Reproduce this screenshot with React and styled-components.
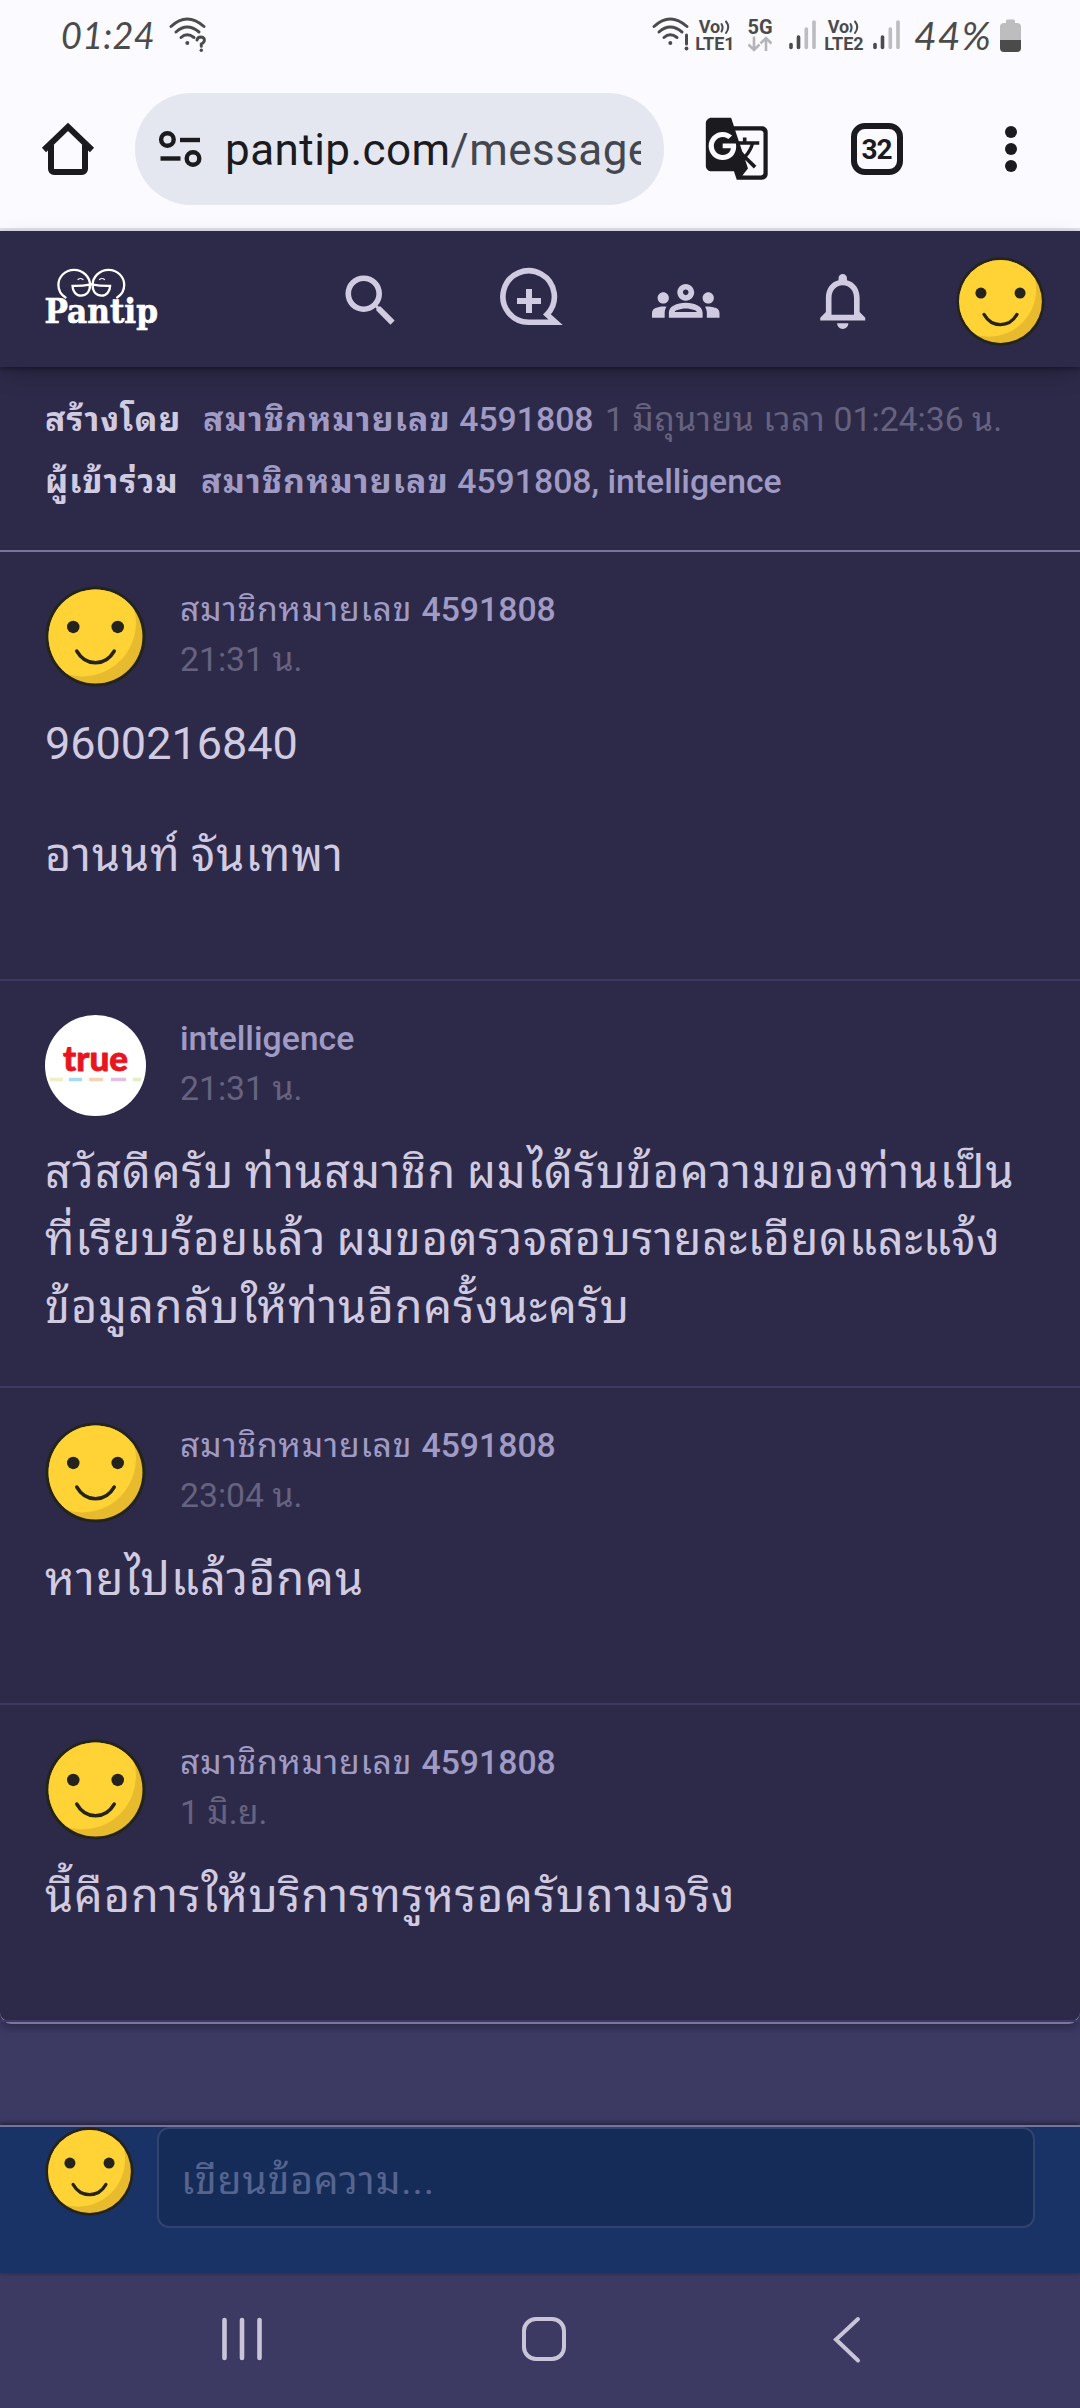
import React, { useId } from "react";
import styled, { createGlobalStyle } from "styled-components";
import { MdSearch, MdOutlineGroups, MdNotificationsNone, MdGTranslate } from "react-icons/md";

const GlobalStyle = createGlobalStyle`
  *, *::before, *::after { box-sizing: border-box; }
  body {
    margin: 0;
    background: #3c3963;
    font-family: Roboto, "Noto Sans Thai Looped", "Noto Sans", sans-serif;
  }
  svg { display: block; flex: none; overflow: visible; }
`;

const Screen = styled.div`
  width: 1080px;
  height: 2408px;
  overflow: hidden;
  display: flex;
  flex-direction: column;
  background: #3c3963;
`;

/* ---------- Status bar ---------- */

const StatusBar = styled.div`
  height: 72px;
  flex: none;
  display: flex;
  align-items: center;
  padding: 0 59px 2px 61px;
  background: #fafaff;
  color: #4b4b4b;
`;

const Handwritten = styled.span`
  font-family: Lato, "Open Sans", sans-serif;
  font-style: italic;
  font-size: ${(p) => p.$size}px;
  line-height: 40px;
  letter-spacing: ${(p) => p.$spacing}px;
  width: ${(p) => p.$width}px;
  white-space: nowrap;
`;

const StatusRight = styled.div`
  margin-left: auto;
  display: flex;
  align-items: center;
`;

const Stack = styled.div`
  width: ${(p) => p.$width}px;
  margin-right: ${(p) => p.$after}px;
  display: flex;
  flex-direction: column;
  align-items: center;
  font-size: 18px;
  font-weight: 700;
  line-height: 17px;
  white-space: nowrap;
`;

const FiveG = styled.div`
  font-size: 20px;
  line-height: 17px;
  font-weight: 700;
`;

const VoLine = styled.div`
  display: flex;
  align-items: center;
  line-height: 17px;
`;

const Gap = styled.div`
  width: ${(p) => p.$w}px;
  flex: none;
`;

function Wifi({ mark }) {
  return (
    <svg width="38" height="36" viewBox="0 0 38 36" fill="none" stroke="#4b4b4b" strokeWidth="3" strokeLinecap="round">
      <path d="M2 9.5 Q18 -5.5 35 9.5" />
      <path d="M7 15 Q18 5 30 15" />
      <path d="M12 20.5 Q18 15 25 20.5" />
      <circle cx="18.3" cy="26" r="2" fill="#4b4b4b" stroke="none" />
      {mark === "?" ? (
        <>
          <path d="M28 23 Q28.5 20 32 20 Q36 20.5 35.3 24 Q34.5 26 32.3 27 V29.3" />
          <circle cx="32.3" cy="33.3" r="1.7" fill="#4b4b4b" stroke="none" />
        </>
      ) : (
        <>
          <path d="M34.5 18 V27" />
          <circle cx="34.5" cy="31.5" r="1.9" fill="#4b4b4b" stroke="none" />
        </>
      )}
    </svg>
  );
}

function SignalBars() {
  return (
    <svg width="28" height="30" viewBox="0 0 28 30" strokeWidth="3.6" strokeLinecap="round">
      <path d="M2 24.5 V27.5" stroke="#4b4b4b" />
      <path d="M9.5 17 V27.5" stroke="#4b4b4b" />
      <path d="M17.3 9 V27.5" stroke="#bdbdbf" />
      <path d="M25 2 V27.5" stroke="#bdbdbf" />
    </svg>
  );
}

function DataArrows() {
  return (
    <svg width="26" height="16" viewBox="0 0 26 16" fill="none" stroke="#b5b5b7" strokeWidth="2.6">
      <path d="M7 0.5 V13.5 M1.5 8.5 L7 14 L12.5 8.5" />
      <path d="M19 15 V2 M13.5 7.5 L19 2 L24.5 7.5" />
    </svg>
  );
}

function Battery() {
  return (
    <svg width="21" height="33" viewBox="0 0 21 33">
      <path d="M6 2 a1.5 1.5 0 0 1 1.5 -1.5 h6 a1.5 1.5 0 0 1 1.5 1.5 v2 h2 a4 4 0 0 1 4 4 v13 h-21 v-13 a4 4 0 0 1 4 -4 h2 z" fill="#bdbdbf" />
      <path d="M0 21 h21 v8 a4 4 0 0 1 -4 4 h-13 a4 4 0 0 1 -4 -4 z" fill="#4b4b4b" />
    </svg>
  );
}

function VoWaves() {
  return (
    <svg width="11" height="14" viewBox="0 0 11 14" fill="none" stroke="#4b4b4b" strokeWidth="2" strokeLinecap="round">
      <path d="M1.5 4 Q3.6 7.5 1.5 11.5" />
      <path d="M6 1.5 Q10.5 7 6 13" />
    </svg>
  );
}

/* ---------- Browser toolbar ---------- */

const Toolbar = styled.div`
  height: 159px;
  flex: none;
  display: flex;
  align-items: center;
  padding: 0 0 2px 42px;
  background: #fafaff;
  border-bottom: 3px solid #e1e1ea;
`;

const Omnibox = styled.div`
  width: 529px;
  height: 112px;
  margin: 0 39px 0 41px;
  padding: 0 23px 0 24px;
  display: flex;
  align-items: center;
  border-radius: 56px;
  background: #e4e7f0;
`;

const Url = styled.div`
  flex: 1;
  margin-left: 23px;
  overflow: hidden;
  white-space: nowrap;
  font-size: 44px;
  line-height: 60px;
  letter-spacing: 0.45px;
  color: #44474f;
  padding-top: 2px;

  b {
    font-weight: 400;
    color: #1b1b1f;
  }
`;

const TabCount = styled.div`
  width: 52px;
  height: 52px;
  margin: 0 0 0 80px;
  display: flex;
  align-items: center;
  justify-content: center;
  border: 6px solid #1b1b1f;
  border-radius: 14px;
  font-size: 28px;
  font-weight: 700;
  letter-spacing: -1px;
  color: #1b1b1f;
`;

function HomeIcon() {
  return (
    <svg width="52" height="52" viewBox="0 0 52 52" fill="none" stroke="#1b1b1f" strokeWidth="6">
      <path d="M2 27 L26 3.8 L50 27" />
      <path d="M9 22 V46 a3 3 0 0 0 3 3 H40 a3 3 0 0 0 3 -3 V22" />
    </svg>
  );
}

function TuneIcon() {
  return (
    <svg width="43" height="37" viewBox="0 0 43 37" fill="none" stroke="#1b1b1f" strokeWidth="4.4">
      <circle cx="8.4" cy="8.5" r="6.3" />
      <path d="M21 9 H41" />
      <circle cx="34" cy="27.5" r="6.3" />
      <path d="M1.5 27.5 H21.5" />
    </svg>
  );
}

function MoreIcon() {
  return (
    <svg width="12" height="48" viewBox="0 0 12 48" fill="#1b1b1f">
      <circle cx="6" cy="7" r="6" />
      <circle cx="6" cy="24" r="6" />
      <circle cx="6" cy="41" r="6" />
    </svg>
  );
}

/* ---------- Shared smiley avatar ---------- */

function Smiley({ size }) {
  const id = useId();
  return (
    <svg width={size} height={size} viewBox="0 0 100 100">
      <clipPath id={id}>
        <circle cx="50" cy="50" r="46.5" />
      </clipPath>
      <circle cx="50" cy="50" r="49.6" fill="#24241d" />
      <circle cx="50" cy="50" r="46.5" fill="#e8bb2f" />
      <circle cx="37" cy="36.5" r="53" fill="#ffd236" clipPath={`url(#${id})`} />
      <circle cx="28" cy="40.5" r="6.2" fill="#24241d" />
      <circle cx="72" cy="40.5" r="6.2" fill="#24241d" />
      <path d="M31.5 64.5 Q38 76 50 76 Q62 76 68.5 64.5" fill="none" stroke="#24241d" strokeWidth="3.6" strokeLinecap="round" />
    </svg>
  );
}

/* ---------- Site header ---------- */

const SiteHeader = styled.header`
  height: 136px;
  flex: none;
  position: relative;
  z-index: 1;
  display: grid;
  grid-template-columns: 292px 159px 156px 157px 147px 90px;
  align-items: center;
  padding: 4px 0 0 45px;
  background: #2d2a49;
  box-shadow: 0 2px 4px rgba(0, 0, 0, 0.35), 0 8px 22px -4px rgba(0, 0, 0, 0.28);
  color: #d1cbe2;
`;

const GLASSES = "M65.5 297.5 C60 294 58.4 289 58.4 285 A15.6 15.2 0 0 1 74 269.8 C83 269.8 90 277 90 285 C90 292 86 295.6 81 295.6 C76 295.6 72.500 291 72.500 285.8 Q82 286 91.3 284.3";

function PantipLogo() {
  return (
    <svg width="116" height="72" viewBox="45 265 116 72">
      <g fill="none" stroke="#fff" strokeWidth="2.3" strokeLinecap="round">
        <path d={GLASSES} />
        <path d={GLASSES} transform="translate(182.6 0) scale(-1 1)" />
        <path d="M78 279.500 Q80.500 277.500 83 279.500" strokeWidth="1.2" />
        <path d="M99.500 279.500 Q102 277.500 104.500 279.500" strokeWidth="1.2" />
      </g>
      <text x="44.500" y="322.700" fill="#fff" stroke="#fff" strokeWidth="0.7" fontFamily="DejaVu Serif, serif" fontWeight="700" fontSize="34" textLength="113.500" lengthAdjust="spacingAndGlyphs">Pantip</text>
    </svg>
  );
}

function NewTopicIcon() {
  return (
    <svg width="68" height="68" viewBox="0 0 68 68" fill="none" stroke="#d1cbe2" strokeWidth="5.6">
      <path d="M59.500 55.200 H33 A25.700 25.700 0 1 1 51 47.500 Z" />
      <path d="M33 22 V46 M21 34 H45" strokeWidth="6" />
    </svg>
  );
}

/* ---------- Conversation ---------- */

const Card = styled.main`
  height: 1657px;
  flex: none;
  background: #2d2a49;
  border-bottom: 2px solid #7a769f;
  border-radius: 0 0 12px 12px;
  box-shadow: 0 4px 8px rgba(0, 0, 0, 0.28);
`;

const Info = styled.section`
  height: 185px;
  padding: 21.5px 0 0 45px;
  border-bottom: 2px solid #77739c;
  font-size: 33.75px;
`;

const InfoRow = styled.div`
  display: flex;
  line-height: 62px;
  white-space: nowrap;
`;

const Label = styled.span`
  width: ${(p) => p.$width}px;
  font-weight: 700;
  letter-spacing: 1.1px;
  color: #d1cbe2;
`;

const Member = styled.span`
  width: ${(p) => (p.$width ? `${p.$width}px` : "auto")};
  font-weight: 500;
  color: #a09bc4;
`;

const Stamp = styled.span`
  color: #66627f;
`;

const Thai = styled.span`
  font-weight: ${(p) => (p.$bold ? 700 : 400)};
  letter-spacing: ${(p) => p.$spacing ?? 0.8}px;
`;

const Message = styled.article`
  padding: 33.75px 45px ${(p) => p.$bottom}px;
  border-bottom: 2px solid #3c3963;
`;

const MessageHead = styled.div`
  height: 101.25px;
  display: flex;
  margin-bottom: 22.5px;
`;

const Meta = styled.div`
  margin: -1px 0 0 34px;
  display: flex;
  flex-direction: column;
  font-size: 33.75px;
  line-height: 50.6px;
  white-space: nowrap;
`;

const Paragraph = styled.p`
  margin: 0 0 ${(p) => p.$after || 0}px;
  font-size: 45px;
  line-height: 67.5px;
  letter-spacing: ${(p) => p.$spacing}px;
  word-spacing: -2px;
  color: #d1cbe2;
  white-space: nowrap;
`;

function TrueAvatar() {
  return (
    <svg width="101" height="101" viewBox="0 0 101 101">
      <circle cx="50.500" cy="50.500" r="50.500" fill="#fff" />
      <text x="18" y="56" fill="#e8141e" stroke="#e8141e" strokeWidth="0.8" strokeLinejoin="round" fontFamily="Lato, sans-serif" fontWeight="900" fontSize="35" textLength="65" lengthAdjust="spacingAndGlyphs">true</text>
      <g strokeWidth="3.500" opacity="0.6">
        <path d="M5 64.500 H18" stroke="#e9e3a0" />
        <path d="M24 64.500 H37" stroke="#6cc3e6" />
        <path d="M44 64.500 H58" stroke="#f0b584" />
        <path d="M66 64.500 H81" stroke="#d490d0" />
        <path d="M88 64.500 H96" stroke="#cfe3a0" />
      </g>
    </svg>
  );
}

const messages = [
  {
    author: "สมาชิกหมายเลข",
    number: "4591808",
    time: "21:31 น.",
    lines: [["9600216840", 0], ["อานนท์ จันเทพา", 1.1]],
    spaced: true,
    bottom: 89.5,
  },
  {
    number: "intelligence",
    time: "21:31 น.",
    official: true,
    lines: [
      ["สวัสดีครับ ท่านสมาชิก ผมได้รับข้อความของท่านเป็น", 1.2],
      ["ที่เรียบร้อยแล้ว ผมขอตรวจสอบรายละเอียดและแจ้ง", 0.87],
      ["ข้อมูลกลับให้ท่านอีกครั้งนะครับ", 1.05],
    ],
    bottom: 45,
  },
  { author: "สมาชิกหมายเลข", number: "4591808", time: "23:04 น.", lines: [["หายไปแล้วอีกคน", 1.1]], bottom: 90 },
  { author: "สมาชิกหมายเลข", number: "4591808", time: "1 มิ.ย.", lines: [["นี้คือการให้บริการทรูหรอครับถามจริง", 1]], bottom: 90 },
];

/* ---------- Composer & system navigation ---------- */

const Composer = styled.div`
  height: 148px;
  margin-top: 101px;
  flex: none;
  display: flex;
  align-items: flex-start;
  padding: 0 45px;
  background: #193366;
  border-top: 2px solid #77739c;
  box-shadow: 0 -1px 5px rgba(0, 0, 0, 0.55);
`;

const Input = styled.div`
  flex: 1;
  height: 101px;
  margin-left: 23px;
  padding-left: 22px;
  border: 2px solid #30446f;
  border-radius: 12px;
  background: #152c58;
  color: #566490;
  font-size: 39px;
  line-height: 105px;
  letter-spacing: 0.9px;
  white-space: nowrap;
`;

const NavBar = styled.nav`
  height: 135px;
  flex: none;
  display: grid;
  grid-template-columns: 1fr 1fr 1fr;
  padding: 44px 82px 0 91px;
`;

const NavSlot = styled.div`
  display: flex;
  justify-content: center;
`;

export default function App() {
  return (
    <>
      <GlobalStyle />
      <Screen>
        <StatusBar>
          <Handwritten $size={36} $spacing={0.3} $width={108}>01:24</Handwritten>
          <Wifi mark="?" />
          <StatusRight>
            <Wifi mark="!" />
            <Gap $w={6} />
            <Stack $width={38} $after={13}>
              <VoLine>Vo<VoWaves /></VoLine>
              <div>LTE1</div>
            </Stack>
            <Stack $width={26} $after={16}>
              <FiveG>5G</FiveG>
              <DataArrows />
            </Stack>
            <SignalBars />
            <Gap $w={7} />
            <Stack $width={40} $after={9}>
              <VoLine>Vo<VoWaves /></VoLine>
              <div>LTE2</div>
            </Stack>
            <SignalBars />
            <Gap $w={13} />
            <Handwritten $size={39} $spacing={1.2} $width={86}>44%</Handwritten>
            <Battery />
          </StatusRight>
        </StatusBar>

        <Toolbar>
          <HomeIcon />
          <Omnibox>
            <TuneIcon />
            <Url><b>pantip.com</b>/message</Url>
          </Omnibox>
          <MdGTranslate size={67.5} color="#1b1b1f" />
          <TabCount>32</TabCount>
          <Gap $w={102} />
          <MoreIcon />
        </Toolbar>

        <SiteHeader>
          <PantipLogo />
          <MdSearch size={67.5} />
          <NewTopicIcon />
          <MdOutlineGroups size={67.5} />
          <MdNotificationsNone size={67.5} />
          <Smiley size={89} />
        </SiteHeader>

        <Card>
          <Info>
            <InfoRow>
              <Label $width={158}>สร้างโดย</Label>
              <Member $width={402}><Thai $bold $spacing={1.15}>สมาชิกหมายเลข</Thai> 4591808</Member>
              <Stamp>1 <Thai $spacing={0.5}>มิถุนายน เวลา</Thai> 01:24:36 น.</Stamp>
            </InfoRow>
            <InfoRow>
              <Label $width={156}>ผู้เข้าร่วม</Label>
              <Member><Thai $bold $spacing={1.15}>สมาชิกหมายเลข</Thai> 4591808, intelligence</Member>
            </InfoRow>
          </Info>
          {messages.map((m, i) => (
            <Message key={i} $bottom={m.bottom}>
              <MessageHead>
                {m.official ? <TrueAvatar /> : <Smiley size={101} />}
                <Meta>
                  <Member>
                    {m.author && <Thai>{m.author} </Thai>}
                    {m.number}
                  </Member>
                  <Stamp>{m.time}</Stamp>
                </Meta>
              </MessageHead>
              {m.lines.map(([line, spacing], j) => (
                <Paragraph key={j} $spacing={spacing} $after={m.spaced && j === 0 ? 45 : 0}>{line}</Paragraph>
              ))}
            </Message>
          ))}
        </Card>

        <Composer>
          <Smiley size={89} />
          <Input>เขียนข้อความ...</Input>
        </Composer>

        <NavBar>
          <NavSlot>
            <svg width="44" height="44" viewBox="0 0 44 44" stroke="#c8c5d8" strokeWidth="4.600" strokeLinecap="round">
              <path d="M4.500 3 V41 M22 3 V41 M39.500 3 V41" />
            </svg>
          </NavSlot>
          <NavSlot>
            <svg width="44" height="44" viewBox="0 0 44 44" fill="none" stroke="#c8c5d8" strokeWidth="4">
              <rect x="2" y="2" width="40" height="40" rx="12" />
            </svg>
          </NavSlot>
          <NavSlot>
            <svg width="28" height="46" viewBox="0 0 28 46" fill="none" stroke="#c8c5d8" strokeWidth="4" strokeLinecap="round">
              <path d="M25 2 L3 22.500 L25 43.500" />
            </svg>
          </NavSlot>
        </NavBar>
      </Screen>
    </>
  );
}
